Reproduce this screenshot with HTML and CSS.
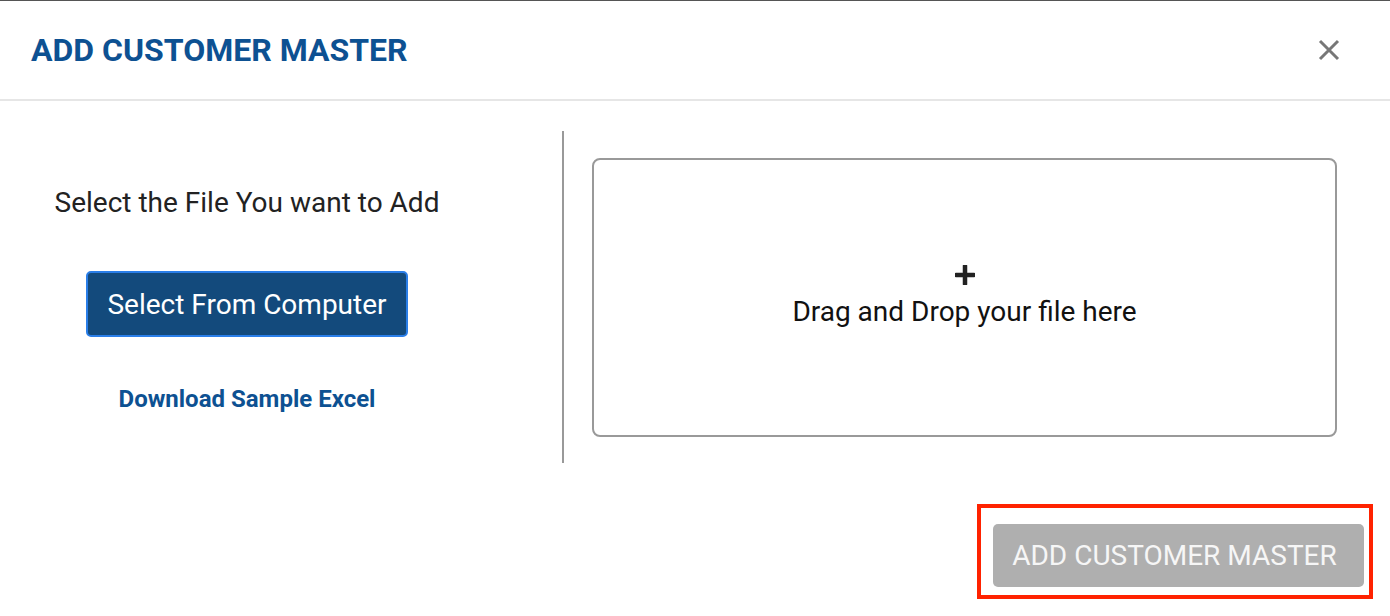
FILE: index.html
```html
<!DOCTYPE html>
<html>
<head>
<meta charset="utf-8">
<link rel="stylesheet" href="styles.css">
</head>
<body>
<div class="modal">
  <header class="modal-header">
    <h1 class="modal-title">ADD CUSTOMER MASTER</h1>
    <button class="close-btn" aria-label="Close">
      <svg width="22" height="22" viewBox="0 0 22 22"><path d="M2 2 L20 20 M20 2 L2 20" stroke="#777" stroke-width="3" fill="none"/></svg>
    </button>
  </header>
  <section class="modal-body">
    <div class="left-col">
      <p class="select-label">Select the File You want to Add</p>
      <button class="select-btn">Select From Computer</button>
      <a class="sample-link" href="#">Download Sample Excel</a>
    </div>
    <div class="divider"></div>
    <div class="drop-zone">
      <svg class="plus" width="20" height="20" viewBox="0 0 20 20"><path d="M10 1 V19 M1 10 H19" stroke="#222" stroke-width="4.5" stroke-linecap="round" fill="none"/></svg>
      <span class="drop-text">Drag and Drop your file here</span>
    </div>
  </section>
  <footer class="modal-footer">
    <div class="highlight">
      <button class="submit-btn">ADD CUSTOMER MASTER</button>
    </div>
  </footer>
</div>
</body>
</html>
```
FILE: styles.css
```css
* { box-sizing: border-box; }
html, body { margin: 0; padding: 0; background: #fff; }
body { font-family: Roboto, "Liberation Sans", sans-serif; }
.modal {
  width: 1390px;
  height: 616px;
  border-top: 1px solid #555;
  background: #fff;
}
.modal-header {
  height: 100px;
  border-bottom: 2px solid #e6e6e6;
  display: flex;
  align-items: center;
  justify-content: space-between;
  padding: 0 50px 0 31px;
}
.modal-title {
  margin: 0;
  font-size: 32px;
  font-weight: 700;
  color: #0d5192;
  line-height: 38px;
}
.close-btn {
  border: 0;
  background: none;
  padding: 0;
  width: 22px;
  height: 22px;
  display: flex;
}
.modal-body {
  display: flex;
  align-items: center;
  padding-top: 30px;
}
.left-col {
  width: 494px;
  margin-right: 68px;
  padding-top: 6px;
  display: flex;
  flex-direction: column;
  align-items: center;
}
.select-label {
  margin: 0;
  font-size: 28px;
  color: #222;
  line-height: 32px;
}
.select-btn {
  margin-top: 52px;
  width: 322px;
  height: 66px;
  background: #134a7c;
  border: 2px solid #2a7ee8;
  border-radius: 5px;
  color: #fff;
  font-family: Roboto, "Liberation Sans", sans-serif;
  font-size: 28px;
}
.sample-link {
  margin-top: 48px;
  font-size: 24px;
  line-height: 28px;
  font-weight: 700;
  color: #0d5192;
  text-decoration: none;
}
.divider {
  width: 2px;
  height: 332px;
  background: #999;
}
.drop-zone {
  margin-left: 28px;
  width: 745px;
  height: 279px;
  border: 2px solid #999;
  border-radius: 8px;
  display: flex;
  flex-direction: column;
  align-items: center;
  justify-content: center;
  color: #111;
}
.plus {
  display: block;
  margin-bottom: 10px;
}
.drop-text {
  font-size: 28px;
  line-height: 34px;
}
.modal-footer {
  display: flex;
  justify-content: flex-end;
  padding: 41px 17px 0 0;
}
.highlight {
  border: 4px solid #ff2200;
  padding: 16px 5px 8px 12px;
}
.submit-btn {
  width: 371px;
  height: 63px;
  padding: 0 8px 0 0;
  background: #afafaf;
  border: 0;
  border-radius: 5px;
  color: #f6f6f6;
  font-family: Roboto, "Liberation Sans", sans-serif;
  font-size: 28px;
  display: block;
}
```
